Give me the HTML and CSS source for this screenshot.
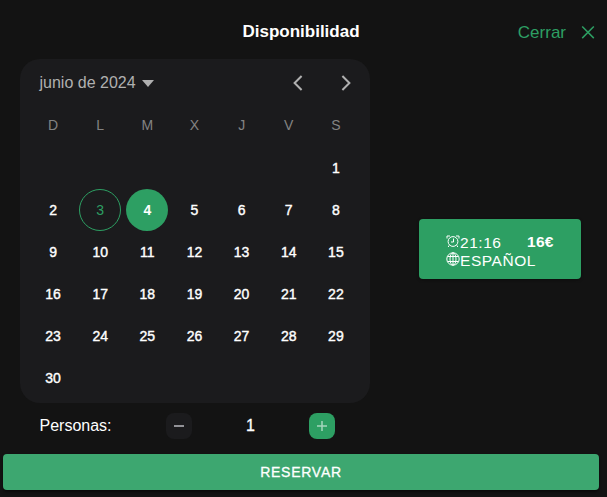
FILE: index.html
```html
<!DOCTYPE html>
<html lang="es">
<head>
<meta charset="utf-8">
<title>Disponibilidad</title>
<link rel="stylesheet" href="styles.css">
</head>
<body>
<header class="header">
  <h1 class="title">Disponibilidad</h1>
  <button class="close">Cerrar
    <svg width="14" height="14" viewBox="0 0 14 14"><path d="M1.2 .5l11.6 11.6M12.8 .5L1.2 12.1"/></svg>
  </button>
</header>
<main class="content">
  <section class="calendar">
    <div class="month-bar">
      <span class="month">junio de 2024</span>
      <svg class="caret" width="12" height="7" viewBox="0 0 12 7"><path d="M0 0h12L6 7z"/></svg>
      <svg class="arrow prev" width="10" height="16" viewBox="0 0 10 16"><path d="M8.6 1L1.6 8l7 7"/></svg>
      <svg class="arrow" width="10" height="16" viewBox="0 0 10 16"><path d="M1.4 1l7 7-7 7"/></svg>
    </div>
    <div class="weekdays"><span>D</span><span>L</span><span>M</span><span>X</span><span>J</span><span>V</span><span>S</span></div>
    <div class="days">
      <span class="first">1</span>
      <span>2</span><span class="today">3</span><span class="selected">4</span><span>5</span><span>6</span><span>7</span><span>8</span>
      <span>9</span><span>10</span><span>11</span><span>12</span><span>13</span><span>14</span><span>15</span>
      <span>16</span><span>17</span><span>18</span><span>19</span><span>20</span><span>21</span><span>22</span>
      <span>23</span><span>24</span><span>25</span><span>26</span><span>27</span><span>28</span><span>29</span>
      <span>30</span>
    </div>
  </section>
  <button class="slot">
    <span class="slot-info">
      <span class="line"><svg width="14" height="14" viewBox="0 0 14 14"><circle cx="7" cy="7.5" r="4.9"/><path d="M7.5 4.5V8H5M3.2 11.3l-1 1.7M10.8 11.3l1 1.7M1 4.5V2h3M13 4.5V2h-3"/></svg>21:16</span>
      <span class="line"><svg width="14" height="14" viewBox="0 0 14 14"><circle cx="7" cy="7" r="6.2"/><ellipse cx="7" cy="7" rx="3" ry="6.2"/><path d="M7 .8v12.4M1.5 4.5h11M1.5 9.5h11"/></svg>ESPAÑOL</span>
    </span>
    <strong class="price">16€</strong>
  </button>
</main>
<div class="people">
  <span class="label">Personas:</span>
  <button class="step"><svg width="12" height="12" viewBox="0 0 12 12"><path d="M1 6h10"/></svg></button>
  <span class="count">1</span>
  <button class="step plus"><svg width="12" height="12" viewBox="0 0 12 12"><path d="M1 6h10M6 1v10"/></svg></button>
</div>
<button class="reserve">RESERVAR</button>
</body>
</html>
```
FILE: styles.css
```css
* { box-sizing: border-box; }
body {
  margin: 0;
  height: 497px;
  overflow: hidden;
  background: #131313;
  color: #fff;
  font: 16px/20px "Liberation Sans", Arial, sans-serif;
}
button { border: 0; padding: 0; background: none; color: inherit; font: inherit; }
svg { display: block; flex: none; fill: none; }
.header {
  display: grid;
  grid-template-columns: 1fr auto 1fr;
  align-items: center;
  height: 59px;
  padding: 4px 12px 0 7px;
}
.title { grid-column: 2; margin: 0; font-size: 17px; line-height: 20px; }
.close { display: flex; align-items: center; justify-self: end; gap: 15px; color: #2d9f63; font-size: 17px; padding-top: 2px; }
.close svg { stroke: #2d9f63; stroke-width: 1.5; }
.content { display: flex; align-items: flex-start; padding-left: 20px; }
.calendar {
  width: 350px;
  height: 344px;
  padding: 14px 10.5px 0 9.5px;
  border-radius: 20px;
  background: #1b1b1d;
}
.month-bar { display: flex; align-items: center; height: 20px; padding: 0 8.5px 0 10px; color: #b0b0b0; }
.caret { margin-left: 6px; fill: #b0b0b0; }
.arrow { stroke: #b0b0b0; stroke-width: 2; }
.prev { margin: 0 38px 0 auto; }
.weekdays, .days { display: grid; grid-template-columns: repeat(7, 1fr); text-align: center; }
.weekdays { margin-top: 22px; color: #838383; font-size: 14px; line-height: 20px; }
.days { grid-auto-rows: 42px; margin-top: 12px; font-size: 14px; line-height: 42px; -webkit-text-stroke: 0.4px #fff; }
.days span { width: 42px; justify-self: center; border-radius: 50%; }
.days .first { grid-column: 7; }
.days .today { border: 1px solid #2d9f63; line-height: 40px; color: #2d9f63; -webkit-text-stroke: 0; }
.days .selected { background: #2d9f63; font-weight: bold; -webkit-text-stroke: 0; }
.slot {
  display: flex;
  width: 162px;
  height: 60px;
  margin: 160px 0 0 49px;
  padding: 14px 27px 0;
  border-radius: 4px;
  background: #2d9f63;
  box-shadow: 0 1px 3px #0006;
  font-size: 15.5px;
  line-height: 18px;
  text-align: left;
}
.slot-info { width: 81px; flex: none; white-space: nowrap; }
.line { display: flex; height: 18px; line-height: 20px; letter-spacing: .55px; }
.line svg { stroke: #fff; stroke-width: 1; margin-top: 1px; }
.price { font-size: 15.5px; letter-spacing: .3px; }
.people { display: flex; align-items: center; height: 46px; padding-left: 39.5px; }
.label { width: 126.5px; }
.step { display: grid; place-items: center; width: 26px; height: 26px; border-radius: 8px; background: #1b1b1d; }
.step svg { stroke: #929297; stroke-width: 2; }
.plus { background: #2d9f63; }
.plus svg { stroke: #a5d6bd; stroke-width: 1.5; }
.count { width: 117px; text-align: center; -webkit-text-stroke: .3px #fff; }
.reserve {
  display: block;
  width: 596px;
  height: 36px;
  margin: 5px 0 0 3px;
  border-radius: 4px;
  background: #3da770;
  box-shadow: 0 2px 3px #0008;
  font-size: 14px;
  letter-spacing: .75px;
  -webkit-text-stroke: .3px #fff;
}
```
